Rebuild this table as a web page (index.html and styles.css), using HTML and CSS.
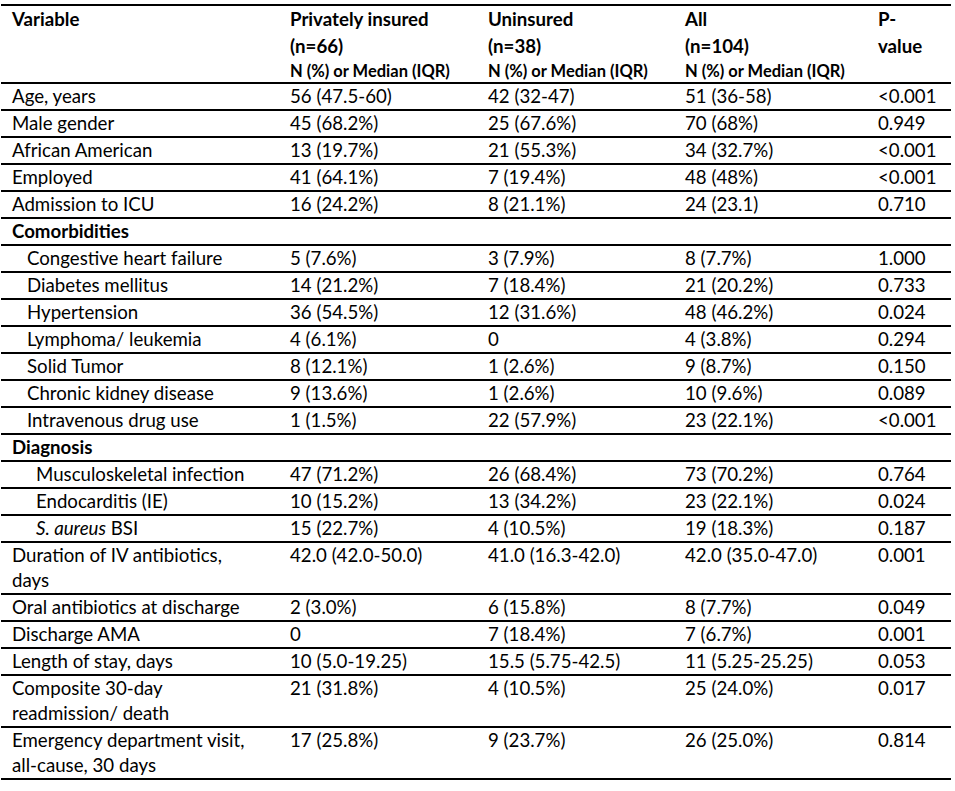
FILE: index.html
```html
<!DOCTYPE html>
<html>
<head>
<meta charset="utf-8">
<link rel="stylesheet" href="styles.css">
</head>
<body>
<table class="stats">
  <colgroup>
    <col class="c1"><col class="c2"><col class="c3"><col class="c4"><col class="c5">
  </colgroup>
  <thead>
    <tr>
      <th>Variable</th>
      <th>Privately insured<br>(n=66)<span class="sub">N (%) or Median (IQR)</span></th>
      <th>Uninsured<br>(n=38)<span class="sub">N (%) or Median (IQR)</span></th>
      <th>All<br>(n=104)<span class="sub">N (%) or Median (IQR)</span></th>
      <th>P-<br>value</th>
    </tr>
  </thead>
  <tbody>
    <tr><td>Age, years</td><td>56 (47.5-60)</td><td>42 (32-47)</td><td>51 (36-58)</td><td>&lt;0.001</td></tr>
    <tr><td>Male gender</td><td>45 (68.2%)</td><td>25 (67.6%)</td><td>70 (68%)</td><td>0.949</td></tr>
    <tr><td>African American</td><td>13 (19.7%)</td><td>21 (55.3%)</td><td>34 (32.7%)</td><td>&lt;0.001</td></tr>
    <tr><td>Employed</td><td>41 (64.1%)</td><td>7 (19.4%)</td><td>48 (48%)</td><td>&lt;0.001</td></tr>
    <tr><td>Admission to ICU</td><td>16 (24.2%)</td><td>8 (21.1%)</td><td>24 (23.1)</td><td>0.710</td></tr>
    <tr><td class="section">Comorbidities</td><td></td><td></td><td></td><td></td></tr>
    <tr><td class="ind1">Congestive heart failure</td><td>5 (7.6%)</td><td>3 (7.9%)</td><td>8 (7.7%)</td><td>1.000</td></tr>
    <tr><td class="ind1">Diabetes mellitus</td><td>14 (21.2%)</td><td>7 (18.4%)</td><td>21 (20.2%)</td><td>0.733</td></tr>
    <tr><td class="ind1">Hypertension</td><td>36 (54.5%)</td><td>12 (31.6%)</td><td>48 (46.2%)</td><td>0.024</td></tr>
    <tr><td class="ind1">Lymphoma/ leukemia</td><td>4 (6.1%)</td><td>0</td><td>4 (3.8%)</td><td>0.294</td></tr>
    <tr><td class="ind1">Solid Tumor</td><td>8 (12.1%)</td><td>1 (2.6%)</td><td>9 (8.7%)</td><td>0.150</td></tr>
    <tr><td class="ind1">Chronic kidney disease</td><td>9 (13.6%)</td><td>1 (2.6%)</td><td>10 (9.6%)</td><td>0.089</td></tr>
    <tr><td class="ind1">Intravenous drug use</td><td>1 (1.5%)</td><td>22 (57.9%)</td><td>23 (22.1%)</td><td>&lt;0.001</td></tr>
    <tr><td class="section">Diagnosis</td><td></td><td></td><td></td><td></td></tr>
    <tr><td class="ind2">Musculoskeletal infection</td><td>47 (71.2%)</td><td>26 (68.4%)</td><td>73 (70.2%)</td><td>0.764</td></tr>
    <tr><td class="ind2">Endocarditis (IE)</td><td>10 (15.2%)</td><td>13 (34.2%)</td><td>23 (22.1%)</td><td>0.024</td></tr>
    <tr><td class="ind2"><i>S. aureus</i> BSI</td><td>15 (22.7%)</td><td>4 (10.5%)</td><td>19 (18.3%)</td><td>0.187</td></tr>
    <tr><td>Duration of IV antibiotics,<br>days</td><td>42.0 (42.0-50.0)</td><td>41.0 (16.3-42.0)</td><td>42.0 (35.0-47.0)</td><td>0.001</td></tr>
    <tr><td>Oral antibiotics at discharge</td><td>2 (3.0%)</td><td>6 (15.8%)</td><td>8 (7.7%)</td><td>0.049</td></tr>
    <tr><td>Discharge AMA</td><td>0</td><td>7 (18.4%)</td><td>7 (6.7%)</td><td>0.001</td></tr>
    <tr><td>Length of stay, days</td><td>10 (5.0-19.25)</td><td>15.5 (5.75-42.5)</td><td>11 (5.25-25.25)</td><td>0.053</td></tr>
    <tr><td>Composite 30-day<br>readmission/ death</td><td>21 (31.8%)</td><td>4 (10.5%)</td><td>25 (24.0%)</td><td>0.017</td></tr>
    <tr><td>Emergency department visit,<br>all-cause, 30 days</td><td>17 (25.8%)</td><td>9 (23.7%)</td><td>26 (25.0%)</td><td>0.814</td></tr>
  </tbody>
</table>
</body>
</html>
```
FILE: styles.css
```css
html, body {
  margin: 0;
  padding: 0;
  background: #fff;
}
body {
  font-family: "Lato", "Open Sans", sans-serif;
  font-size: 18.67px;
  color: #000;
}
.stats {
  border-collapse: collapse;
  table-layout: fixed;
  width: 950px;
  margin: 4px 0 0 1px;
  border-top: 2px solid #000;
}
.c1 { width: 278px; }
.c2 { width: 198px; }
.c3 { width: 197px; }
.c4 { width: 193px; }
.c5 { width: 84px; }
.stats tr {
  border-bottom: 2px solid #000;
}
.stats th {
  text-align: left;
  vertical-align: top;
  font-weight: bold;
  line-height: 27px;
  padding: 0 0 0 11px;
}
.stats th .sub {
  display: block;
  font-size: 16.5px;
  line-height: 22px;
  white-space: nowrap;
}
.stats td {
  vertical-align: top;
  line-height: 25px;
  padding: 0 0 0 11px;
  white-space: nowrap;
}
.stats td.section {
  font-weight: bold;
}
.stats td.ind1 {
  padding-left: 26px;
}
.stats td.ind2 {
  padding-left: 35px;
}
```
